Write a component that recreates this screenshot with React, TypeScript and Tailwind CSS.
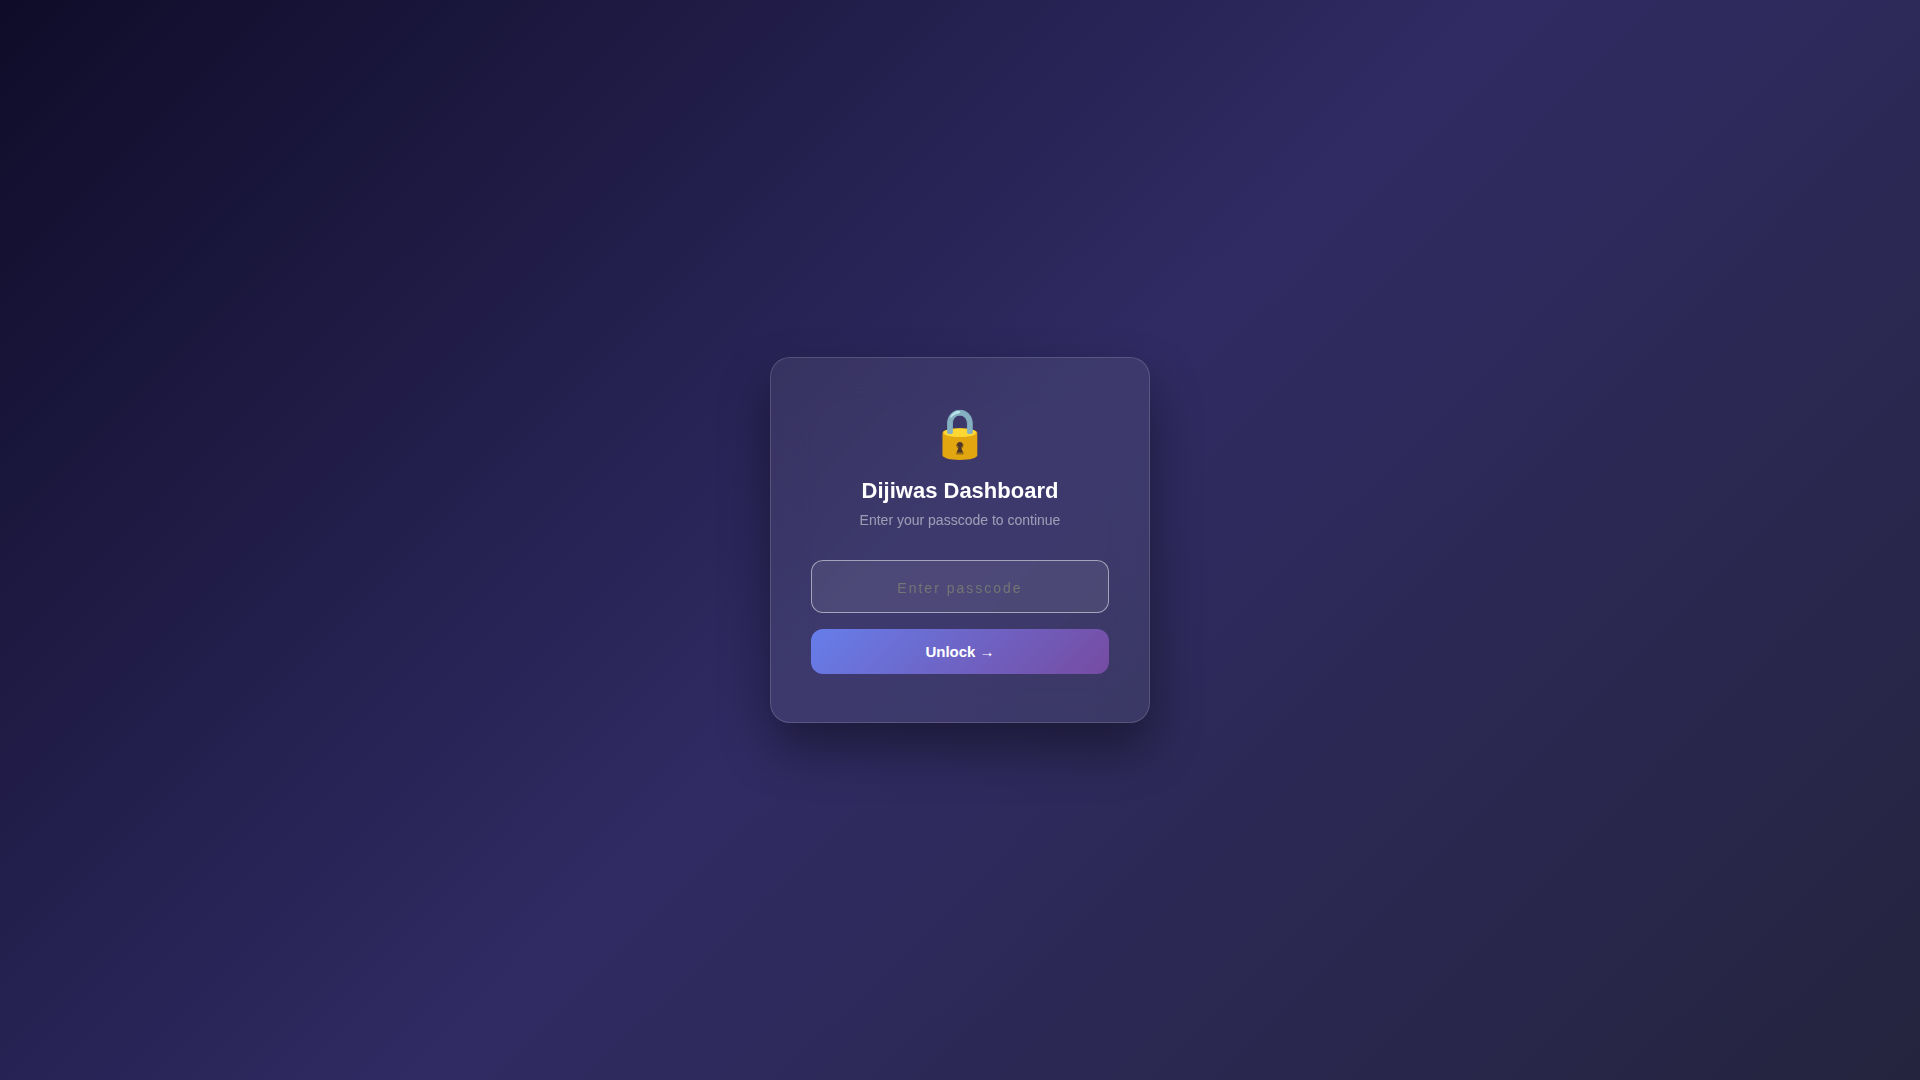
import { useState } from 'react'
import type { FormEvent } from 'react'

export default function App() {
  const [passcode, setPasscode] = useState('')

  const handleSubmit = (e: FormEvent) => {
    e.preventDefault()
    setPasscode('')
  }

  return (
    <main className="min-h-screen flex items-center justify-center bg-[linear-gradient(135deg,#0f0c29,#302b63,#24243e)] font-['Liberation_Sans',Arial,sans-serif]">
      <form
        onSubmit={handleSubmit}
        className="w-full max-w-[380px] px-10 py-12 rounded-[20px] border border-white/15 bg-white/7 backdrop-blur-[20px] shadow-[0_25px_50px_rgba(0,0,0,0.4)] text-center"
      >
        <div className="mb-4 text-[48px] leading-[56px]">🔒</div>
        <h1 className="mb-2 text-[22px] leading-[26px] font-bold text-white">Dijiwas Dashboard</h1>
        <p className="mb-8 text-sm leading-4 text-white/50">Enter your passcode to continue</p>

        <input
          type="password"
          aria-label="Passcode"
          placeholder="Enter passcode"
          value={passcode}
          onChange={(e) => setPasscode(e.target.value)}
          className="block w-full mb-4 px-4 py-3.5 rounded-xl border border-white/50 bg-white/8 text-[20px] leading-[23px] text-center text-white tracking-[2px] placeholder:text-sm placeholder:text-[#757575] outline-none"
        />
        <button
          type="submit"
          className="w-full p-3.5 rounded-xl bg-[linear-gradient(135deg,#667eea,#764ba2)] text-[15px] leading-[17px] font-semibold text-white cursor-pointer"
        >
          Unlock →
        </button>
      </form>
    </main>
  )
}
